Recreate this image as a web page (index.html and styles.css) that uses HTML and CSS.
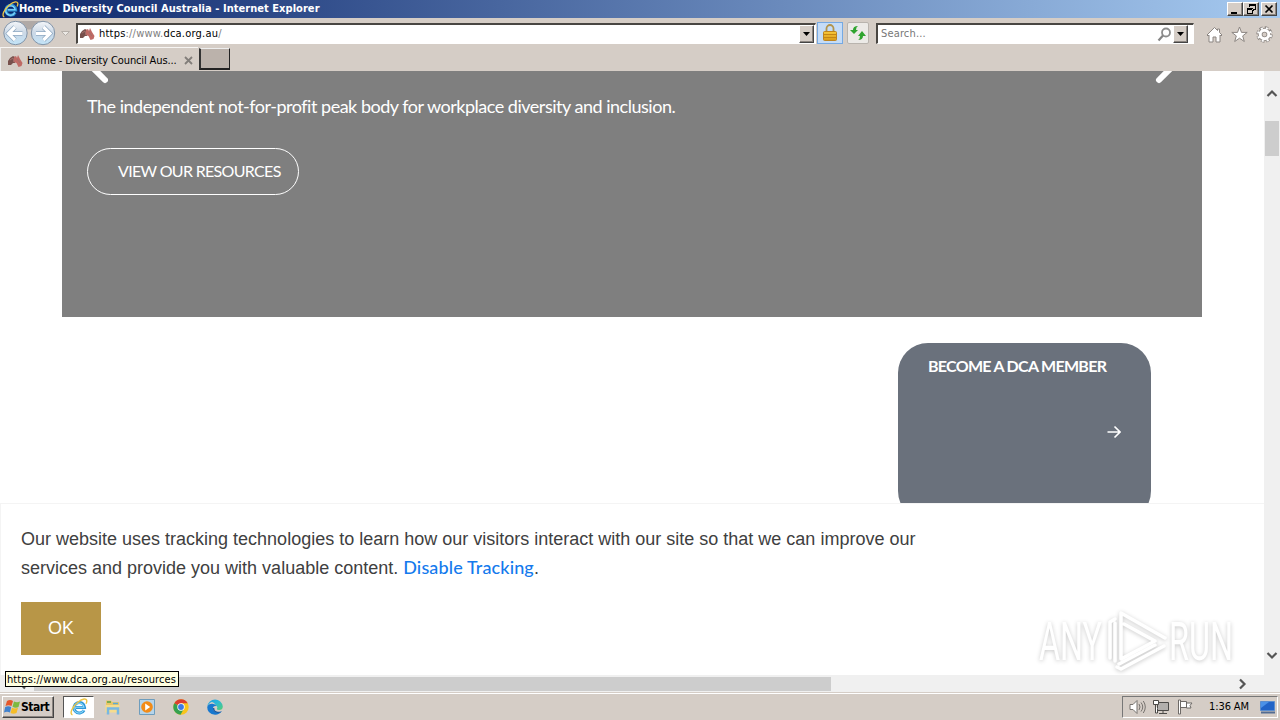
FILE: index.html
```html
<!DOCTYPE html>
<html lang="en">
<head>
<meta charset="utf-8">
<title>Home - Diversity Council Australia</title>
<link rel="stylesheet" href="styles.css">
</head>
<body>
<svg width="0" height="0" class="defs">
  <defs>
    <linearGradient id="disc" x1="0" y1="0" x2="0" y2="1"><stop offset="0" stop-color="#f4f6f9"/><stop offset=".5" stop-color="#cbd8e6"/><stop offset="1" stop-color="#c2e4f8"/></linearGradient>
    <linearGradient id="gold" x1="0" y1="0" x2="0" y2="1"><stop offset="0" stop-color="#f8c83c"/><stop offset="1" stop-color="#d99a18"/></linearGradient>
    <linearGradient id="edge" x1="0" y1="0" x2="1" y2="1"><stop offset="0" stop-color="#1d9be0"/><stop offset=".45" stop-color="#2bb8d8"/><stop offset="1" stop-color="#55d070"/></linearGradient>
    <symbol id="ie" viewBox="0 0 18 18">
      <path d="M14 12.200A5.300 5.300 0 1 1 14.600 9.600H6" fill="none" stroke="#2f97d8" stroke-width="3"/>
      <path d="M13.500 12A4.900 4.900 0 0 1 4.200 9Q5 5.200 9 5q4 0 5 4.300H6" fill="none" stroke="#8edafa" stroke-width="1.100"/>
      <path d="M2.500 16.800C-.8 16 2 9 7.500 4.500S16.500.2 16.800 2.800c.1 1-.3 2-.8 3" fill="none" stroke="#edc445" stroke-width="1.400"/>
    </symbol>
    <symbol id="aus" viewBox="0 0 16 14">
      <path d="M1 7 3 4l3-2 2 1 0 6-2 0-2 2-3 0z" fill="#77504c"/>
      <path d="M7 3 9 2l1 2 1-3 2 4 2.500 4-1 3-3 1-2-4-3-1z" fill="#bf6a65"/>
      <path d="M3 6l3-2 1 4M10 5l3 4" fill="none" stroke="#a16f6b"/>
    </symbol>
  </defs>
</svg>

<header class="titlebar">
  <svg class="title-icon" width="17" height="17"><use href="#ie"/></svg>
  <span class="title-text">Home - Diversity Council Australia - Internet Explorer</span>
  <div class="win-buttons">
    <svg class="bevel" width="15" height="13"><path d="M3 9h6v2H3z"/></svg>
    <svg class="bevel" width="15" height="13"><path d="M5 1h7v6h-2v1H9V7H8V6h3V3H6v1H5zM3 5h6v6H3zm1 2v3h4V7z" fill-rule="evenodd"/></svg>
    <svg class="bevel gap" width="15" height="13"><path d="m3.500 2.500 7 7m0-7-7 7" stroke="#000" stroke-width="1.700"/></svg>
  </div>
</header>

<div class="toolbar">
  <svg class="nav" width="72" height="29" viewBox="0 0 72 29">
    <path d="M15 3h28v5q-14 7-28 0z" fill="#b0a9a6"/>
    <g fill="url(#disc)" stroke="#8294a8"><circle cx="15.500" cy="15" r="11.700"/><circle cx="43" cy="15" r="11.700"/></g>
    <g fill="none" stroke="#8fa9c2" stroke-width="4.600"><path d="M22.500 15.500H9M15 9l-6.500 6.500L15 22M36 15.500h13.500M43.500 9l6.500 6.500-6.500 6.500"/></g>
    <g fill="none" stroke="#fff" stroke-width="3.200"><path d="M22.500 15.500H9M15 9l-6.500 6.500L15 22M36 15.500h13.500M43.500 9l6.500 6.500-6.500 6.500"/></g>
    <path d="M61.500 13.500h8l-4 4z" fill="#ece9e5" stroke="#b6b0aa"/>
  </svg>
  <div class="field address">
    <svg width="16" height="14"><use href="#aus"/></svg>
    <span class="url"><i>https</i><em>://www.</em><i>dca.org.au</i><em>/</em></span>
    <svg class="bevel drop" width="15" height="18"><path d="M3 6h7l-3.500 4z"/></svg>
  </div>
  <div class="lock"><svg width="14" height="18" viewBox="0 0 14 18"><path d="M3.500 8V4.500a3.500 3.500 0 0 1 7 0V8" fill="none" stroke="#b2944c" stroke-width="1.800"/><rect x=".5" y="7.500" width="13" height="9" rx="1" fill="url(#gold)" stroke="#bd8420"/><path d="M1 10.500h12M1 13.500h12" stroke="#c58616"/></svg></div>
  <div class="refresh"><svg width="16" height="16" viewBox="0 0 16 16" fill="#2fa42f"><path d="M4 9 0 5h3q0-4 5-4-2 1-2 4h2zM12 6l4 5h-3q0 4-5 4 2-1 2-4H8z"/></svg></div>
  <div class="field search">
    <span>Search...</span>
    <svg class="glass" width="15" height="15" viewBox="0 0 15 15"><circle cx="9" cy="5.500" r="4" fill="#fff" stroke="#8d8d8d" stroke-width="1.800"/><path d="m6 8.500-4.500 5" stroke="#858585" stroke-width="2.200"/></svg>
    <svg class="bevel drop" width="15" height="18"><path d="M3 6h7l-3.500 4z"/></svg>
  </div>
  <div class="commands">
    <svg width="17" height="17" viewBox="0 0 17 17"><path d="M8.500 1.500 1 9l1 1 1-1v7h4v-5h3v5h4V9l1 1 1-1-2.500-2.500V3h-2v1.500z" fill="#fff" stroke="#8c8682"/></svg>
    <svg width="17" height="17" viewBox="0 0 17 17"><path d="m8.500 1 2 5.400h5.700l-4.500 3.500 1.600 5.600-4.800-3.300-4.800 3.300 1.600-5.600L.8 6.400h5.700z" fill="#fff" stroke="#8c8682"/></svg>
    <svg width="17" height="17" viewBox="0 0 17 17"><circle cx="8.500" cy="8.500" r="6.700" fill="none" stroke="#8c8682" stroke-width="3" stroke-dasharray="3.400 1.862"/><circle cx="8.500" cy="8.500" r="4.300" fill="#d4ccc5" stroke="#8c8682" stroke-width="4.600"/><circle cx="8.500" cy="8.500" r="6.500" fill="none" stroke="#fff" stroke-width="2" stroke-dasharray="2 3.105" stroke-dashoffset="-.6"/><circle cx="8.500" cy="8.500" r="4.300" fill="none" stroke="#fff" stroke-width="3"/></svg>
  </div>
</div>

<div class="tabs">
  <div class="tab">
    <svg width="16" height="14"><use href="#aus"/></svg>
    <span>Home - Diversity Council Aus...</span>
    <svg class="close" width="9" height="9"><path d="m1 1 7 7m0-7-7 7" stroke="#827e7a" stroke-width="1.800"/></svg>
  </div>
  <div class="newtab"></div>
</div>

<div class="viewport">
  <main class="page">
    <section class="hero">
      <svg class="chev left" width="18" height="13"><path d="M3-3 15 9" stroke="#fff" stroke-width="6" stroke-linecap="round"/></svg>
      <svg class="chev right" width="20" height="13"><path d="M16-3 4 9" stroke="#fff" stroke-width="6" stroke-linecap="round"/></svg>
      <p>The independent not-for-profit peak body for workplace diversity and inclusion.</p>
      <a class="pill"><span>VIEW OUR RESOURCES</span></a>
    </section>
    <section class="member">
      <h2>BECOME A DCA MEMBER</h2>
      <svg width="14" height="14" viewBox="0 0 14 14"><path d="M.5 7h12M7.500 1.500 13 7l-5.500 5.500" fill="none" stroke="#fff" stroke-width="1.600"/></svg>
    </section>
    <section class="cookie">
      <p>Our website uses tracking technologies to learn how our visitors interact with our site so that we can improve our<br>services and provide you with valuable content. <a>Disable Tracking</a>.</p>
      <button>OK</button>
    </section>
    <svg class="watermark" width="226" height="76" viewBox="0 0 226 76">
      <g fill="#fff" class="wm-text">
        <text x="8" y="57" textLength="63" lengthAdjust="spacingAndGlyphs">ANY</text>
        <text x="138" y="57" textLength="64" lengthAdjust="spacingAndGlyphs">RUN</text>
      </g>
      <g class="wm-text" fill="none" stroke="#fff" stroke-width="3.500" stroke-linejoin="round" stroke-linecap="round">
        <path d="M79 55V19l5-3M84 20v38"/><path d="m134 35-44-25v46l34-18-31-17M90 66l43-23M88 61l36-19M90 66l-4-2"/>
      </g>
    </svg>
  </main>
  <div class="vscroll">
    <svg width="12" height="9"><path d="m1.500 7 4.500-4.500L10.500 7" fill="none" stroke="#555" stroke-width="2.200"/></svg>
    <div class="vthumb"></div>
    <svg width="12" height="9"><path d="m1.500 2 4.500 4.500L10.500 2" fill="none" stroke="#555" stroke-width="2.200"/></svg>
  </div>
</div>
<div class="hscroll">
  <svg width="9" height="12"><path d="M7 1.500 2.500 6 7 10.500" fill="none" stroke="#555" stroke-width="2.200"/></svg>
  <div class="hthumb"></div>
  <svg width="9" height="12"><path d="M2 1.500 6.500 6 2 10.500" fill="none" stroke="#555" stroke-width="2.200"/></svg>
  <div class="status"><span>https://www.dca.org.au/resources</span></div>
</div>

<footer class="taskbar">
  <div class="start bevel">
    <svg width="17" height="16" viewBox="0 0 17 16"><path d="M3 2q3-2 6 0L7.500 7q-3-1.500-6 0z" fill="#e5572b"/><path d="M10 2.500q3 1.500 6 0L14.500 8q-3 1.500-6-.3z" fill="#7db940"/><path d="M1.200 8q3-1.500 6 0L6 13.500q-3-1.500-6 0z" fill="#4182ce"/><path d="M8 8.700q3 1.500 6 0L12.500 14q-3 1.500-6 0z" fill="#f5bd28"/></svg>
    <span>Start</span>
  </div>
  <div class="task active"><svg width="18" height="18"><use href="#ie"/></svg></div>
  <div class="task t2"><svg width="16" height="16" viewBox="0 0 16 16"><path d="M1 1.500h5l1 1.500h7v4H1z" fill="#e8c768"/><path d="M2 3h4" stroke="#57a04c" stroke-width="1.500"/><path d="M8 4.500h5" stroke="#5aa8d8" stroke-width="1.500"/><path d="M.5 6h14v7.500H.5z" fill="#f6dc8d"/><path d="M3 15.500v-6h10v6" fill="none" stroke="#78b8e2" stroke-width="2.500"/></svg></div>
  <div class="task t3"><svg width="16" height="16" viewBox="0 0 16 16"><path d="M.5.500h15v15H.5z" fill="#b6d4ea" stroke="#6e9dbd"/><circle cx="8" cy="8" r="5.800" fill="#f28b18"/><path d="m6.200 4.500 5 3.500-5 3.500z" fill="#fff"/></svg></div>
  <div class="task t4"><svg width="16" height="16" viewBox="0 0 16 16"><circle cx="8" cy="8" r="7.700" fill="#f8c51c"/><path d="M8 8 1.300 4.200A7.700 7.700 0 0 1 14.700 4.200H8z" fill="#dc3e30"/><path d="m8 8-6.700-3.800A7.700 7.700 0 0 0 7.500 15.700L11 9.500z" fill="#36a150"/><circle cx="8" cy="8" r="3.700" fill="#fff"/><circle cx="8" cy="8" r="2.900" fill="#3d7ae5"/></svg></div>
  <div class="task t5"><svg width="16" height="16" viewBox="0 0 16 16"><path d="M.3 7.500A7.800 7.800 0 0 1 15.800 7.500Q15.800 11 12 11q-2.500 0-2-1.500Q11 8 9 6.500 5-1 .3 7.500" fill="url(#edge)"/><path d="M.2 8Q1.500 4.500 5.500 4.800 8.500 5 9.500 7 5.500 6.500 6 10q1 4 5 3.500 2 0 4-1.500-3 4-7 3.800Q.2 15 .2 8" fill="#1878cf"/><path d="M6 9q-.5 4 4 5 3 .3 4.800-1.800-2.800 1-5 .3Q7.300 12 7.300 9z" fill="#155aa5"/></svg></div>
  <div class="tray">
    <svg width="17" height="16" viewBox="0 0 17 16" fill="none" stroke="#77736f"><path d="M1 5.500h3l4-4v13l-4-4H1z" fill="#fff"/><path d="M10 5q2 3 0 6M12 3.500q3.500 4.500 0 9M14.300 2q4 6 0 12"/></svg>
    <svg width="17" height="16" viewBox="0 0 17 16" stroke="#4c4a47"><path d="M4.500 3.500h11v8h-11z" fill="#b2afac"/><path d="M6 14.500h8M10 12v2" fill="none"/><path d="M.5 1.500h5v4h-5zM2.500 6v8h2v-4" fill="#fff"/></svg>
    <svg width="17" height="16" viewBox="0 0 17 16" fill="#fff" stroke="#6e6a67"><path d="M1.500 1h2v14h-2zM3.500 2.500h6v6h-6zM9.500 4H15l-2 2.500L14 9H9.500z"/></svg>
    <span class="clock">1:36 AM</span>
    <svg class="desk" width="16" height="14" viewBox="0 0 16 14"><path d="M.5 1.500h14v9H.5z" fill="#2163c7" stroke="#5b8dce"/><path d="m1 2 8 0-8 6z" fill="#4b91e7"/><path d="M1 12.500h14" stroke="#536c92" stroke-width="2"/></svg>
  </div>
</footer>
</body>
</html>
```

FILE: styles.css
```css
* { box-sizing: border-box; }
body {
  margin: 0; width: 1280px; height: 720px; overflow: hidden;
  display: flex; flex-direction: column;
  font: 11px/14px "DejaVu Sans Condensed", "DejaVu Sans", sans-serif;
  font-stretch: condensed; color: #000; background: #d5cdc6;
}
svg { display: block; flex: none; }
.defs { position: absolute; }
span, p, h2 { white-space: nowrap; }
i, em { font-style: normal; }
.bevel { background: #d5cdc6; border: 1px solid; border-color: #fff #444 #444 #fff; box-shadow: inset -1px -1px #8b8580; }

.titlebar { height: 18px; display: flex; align-items: center; padding: 0 3px 0 2px; background: linear-gradient(90deg, #0c266b, #a6caf0); color: #fff; font-weight: bold; }
.title-text { letter-spacing: .045px; }
.win-buttons { margin-left: auto; display: flex; }
.win-buttons .gap { margin-left: 2px; }
.win-buttons svg { width: 16px; height: 14px; }

.toolbar { height: 29px; display: flex; align-items: flex-start; background: #d5cdc6; }
.nav { margin-right: 4px; }
.field { height: 21px; margin-top: 5px; display: flex; align-items: center; background: #fff; border: 1px solid #fff; border-top: 2px solid #494642; border-left: 2px solid #494642; }
.address { width: 740px; padding: 0 1px; }
.address .url { margin-left: 4px; letter-spacing: .21px; }
.url em { color: #808080; }
.drop { margin-left: auto; }
.lock { width: 26px; height: 22px; margin: 4px 0 0 1px; background: #c5dcf7; border: 1px solid #75a9e3; display: flex; align-items: center; justify-content: center; }
.refresh { width: 22px; height: 22px; margin: 4px 0 0 4px; border: 1px solid #b9b4ae; border-radius: 2px; background: #eceae7; display: flex; align-items: center; justify-content: center; }
.search { width: 318px; margin-left: 7px; padding: 0 5px 0 3px; color: #777; }
.search span { letter-spacing: .15px; }
.search .glass { margin-left: auto; }
.search .drop { margin-left: 1px; }
.commands { display: flex; gap: 8px; margin: 8px 0 0 12px; }

.tabs { height: 24px; display: flex; }
.tab { width: 198px; display: flex; align-items: center; padding: 2px 5px 0 6px; border-top: 1px solid #f8f6f4; border-left: 1px solid #eee; }
.tab span { margin-left: 4px; letter-spacing: -.13px; }
.tab .close { margin-left: auto; }
.newtab { width: 31px; height: 22px; margin: 1px 0 0 1px; background: #bbb2ab; border: 1px solid #222; border-top-color: #eee; border-left: 2px solid #333; border-bottom-width: 2px; }

.viewport { height: 604px; display: flex; background: #fff; }
.page { width: 1264px; height: 604px; position: relative; overflow: hidden; font-family: Lato, sans-serif; font-stretch: normal; }
.hero { position: relative; width: 1140px; height: 246px; margin-left: 62px; padding: 24px 25px; background: #7f7f7f; color: #fff; }
.chev { position: absolute; top: 0; }
.chev.left { left: 28px; }
.chev.right { right: 27px; }
.hero p { margin: 0; font-size: 18px; line-height: 22px; letter-spacing: -.485px; }
.pill { display: block; width: 212px; height: 47px; margin-top: 31px; padding-left: 30px; border: 1px solid #fff; border-radius: 24px; font-size: 16px; line-height: 43px; letter-spacing: -.67px; }
.member { width: 253px; height: 178px; margin: 26px 0 0 898px; padding: 14px 30px; border-radius: 30px; background: #6a717c; color: #fff; }
.member h2 { margin: 0; font-size: 16px; line-height: 18px; letter-spacing: -.7px; }
.member svg { margin: 50px 0 0 auto; }
.cookie { position: absolute; left: 0; bottom: 0; width: 1264px; height: 172px; padding: 21px 20px; background: #fff; border: solid #f4f4f4; border-width: 1px 0 0 1px; font: 18px/29px "Liberation Sans", sans-serif; color: #404040; }
.cookie p { margin: 0; height: 58px; }
.cookie a { font-family: Lato, sans-serif; font-weight: 500; line-height: 1; color: #147aed; letter-spacing: .13px; }
.cookie button { display: block; width: 80px; height: 53px; margin-top: 19px; padding: 0; border: 0; background: #b89647; color: #fff; font: 18px "Liberation Sans", sans-serif; }
.watermark { position: absolute; left: 1031px; top: 532px; }
.wm-text { font: 400 53px Roboto, sans-serif; filter: drop-shadow(0 1px 2px rgba(0,0,0,.22)); }

.vscroll { width: 16px; background: #f0f0f0; display: flex; flex-direction: column; align-items: center; padding: 18px 0 15px; }
.vthumb { width: 14px; height: 35px; margin: 23px 0 auto; background: #cdcdcd; }
.hscroll { position: relative; height: 17px; background: #f0f0f0; display: flex; align-items: center; padding: 0 33px 0 18px; }
.hthumb { width: 797px; height: 14px; margin: 0 auto 0 7px; background: #cdcdcd; }
.status { position: absolute; left: 5px; top: -4px; width: 174px; height: 16px; border: 1px solid #000; background: #ffffe1; padding-left: 1px; line-height: 15px; }
.status span { letter-spacing: .1px; }

.taskbar { height: 28px; border-top: 1px solid #d5cdc6; box-shadow: inset 0 1px #fff; display: flex; align-items: flex-start; padding: 3px 2px 0; }
.start { width: 52px; height: 22px; display: flex; align-items: center; padding-left: 1px; font-weight: bold; }
.start span { font-size: 12px; letter-spacing: -.5px; }
.task { height: 22px; display: flex; align-items: center; justify-content: center; width: 16px; }
.task.active { width: 31px; margin-left: 9px; background: #fff; border: 1px solid; border-color: #555 #fff #fff #555; }
.t2 { margin-left: 11px; } .t3, .t4, .t5 { margin-left: 18px; }
.tray { width: 156px; height: 22px; margin-left: auto; display: flex; align-items: center; padding-left: 6px; border: 1px solid; border-color: #777 #fff #fff #777; }
.tray svg + svg { margin-left: 7px; }
.clock { margin-left: 15px; width: 41px; letter-spacing: -.1px; }
.tray .desk { margin-left: 10px; }
```
